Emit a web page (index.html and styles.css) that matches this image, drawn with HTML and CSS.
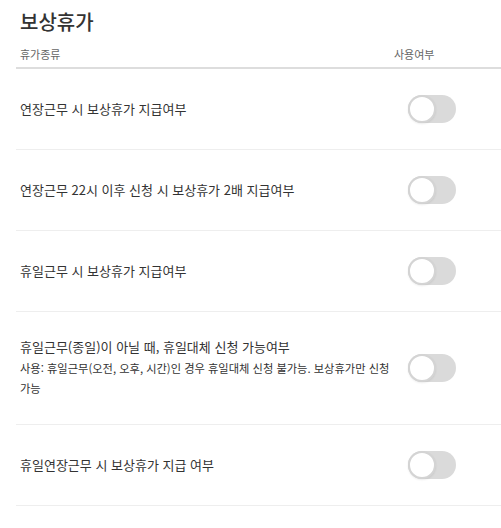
FILE: index.html
```html
<!DOCTYPE html>
<html lang="ko">
<head>
  <meta charset="UTF-8">
  <title>보상휴가</title>
  <link rel="stylesheet" href="styles.css">
</head>
<body>
  <div class="section">
    <h2 class="section-title">보상휴가</h2>
    <div class="table-head">
      <div class="col-name">휴가종류</div>
      <div class="col-use">사용여부</div>
    </div>

    <div class="row">
      <div class="col-name">
        <div class="row-title">연장근무 시 보상휴가 지급여부</div>
      </div>
      <div class="col-use"><span class="toggle"></span></div>
    </div>

    <div class="row">
      <div class="col-name">
        <div class="row-title">연장근무 22시 이후 신청 시 보상휴가 2배 지급여부</div>
      </div>
      <div class="col-use"><span class="toggle"></span></div>
    </div>

    <div class="row">
      <div class="col-name">
        <div class="row-title">휴일근무 시 보상휴가 지급여부</div>
      </div>
      <div class="col-use"><span class="toggle"></span></div>
    </div>

    <div class="row">
      <div class="col-name">
        <div class="row-title">휴일근무(종일)이 아닐 때, 휴일대체 신청 가능여부</div>
        <div class="row-desc">사용: 휴일근무(오전, 오후, 시간)인 경우 휴일대체 신청 불가능. 보상휴가만 신청 가능</div>
      </div>
      <div class="col-use"><span class="toggle"></span></div>
    </div>

    <div class="row">
      <div class="col-name">
        <div class="row-title">휴일연장근무 시 보상휴가 지급 여부</div>
      </div>
      <div class="col-use"><span class="toggle"></span></div>
    </div>
  </div>
</body>
</html>
```

FILE: styles.css
```css
body {
  margin: 0;
  font-family: 'Noto Sans CJK KR', 'Noto Sans', sans-serif;
  color: #333;
  background: #fff;
  overflow: hidden;
}

.section {
  margin-left: 16px;
}

.section-title {
  margin: 0;
  padding: 8px 4px 0;
  font-size: 20px;
  font-weight: 500;
  line-height: 28px;
  color: #333;
}

.table-head {
  display: flex;
  padding: 10px 4px 5px;
  font-size: 11px;
  line-height: 16px;
  color: #666;
  border-bottom: 2px solid #ddd;
}

.col-name {
  width: 370px;
  flex-shrink: 0;
}

.col-use {
  padding-left: 4px;
}

.row {
  display: flex;
  align-items: center;
  padding: 26px 4px;
  border-bottom: 1px solid #eee;
}

.row .col-use {
  padding-left: 18px;
}

.row-title {
  font-size: 13px;
  line-height: 18px;
}

.row-desc {
  margin-top: 2px;
  font-size: 11.25px;
  line-height: 20px;
  word-break: keep-all;
}

.toggle {
  display: block;
  position: relative;
  width: 48px;
  height: 28px;
  border-radius: 14px;
  background: #dadada;
}

.toggle::before {
  content: '';
  position: absolute;
  left: 0;
  top: 0;
  width: 24px;
  height: 24px;
  border-radius: 50%;
  background: #fff;
  border: 2px solid #d4d4d4;
  box-shadow: 0 1px 2px rgba(0, 0, 0, 0.08);
}
```
